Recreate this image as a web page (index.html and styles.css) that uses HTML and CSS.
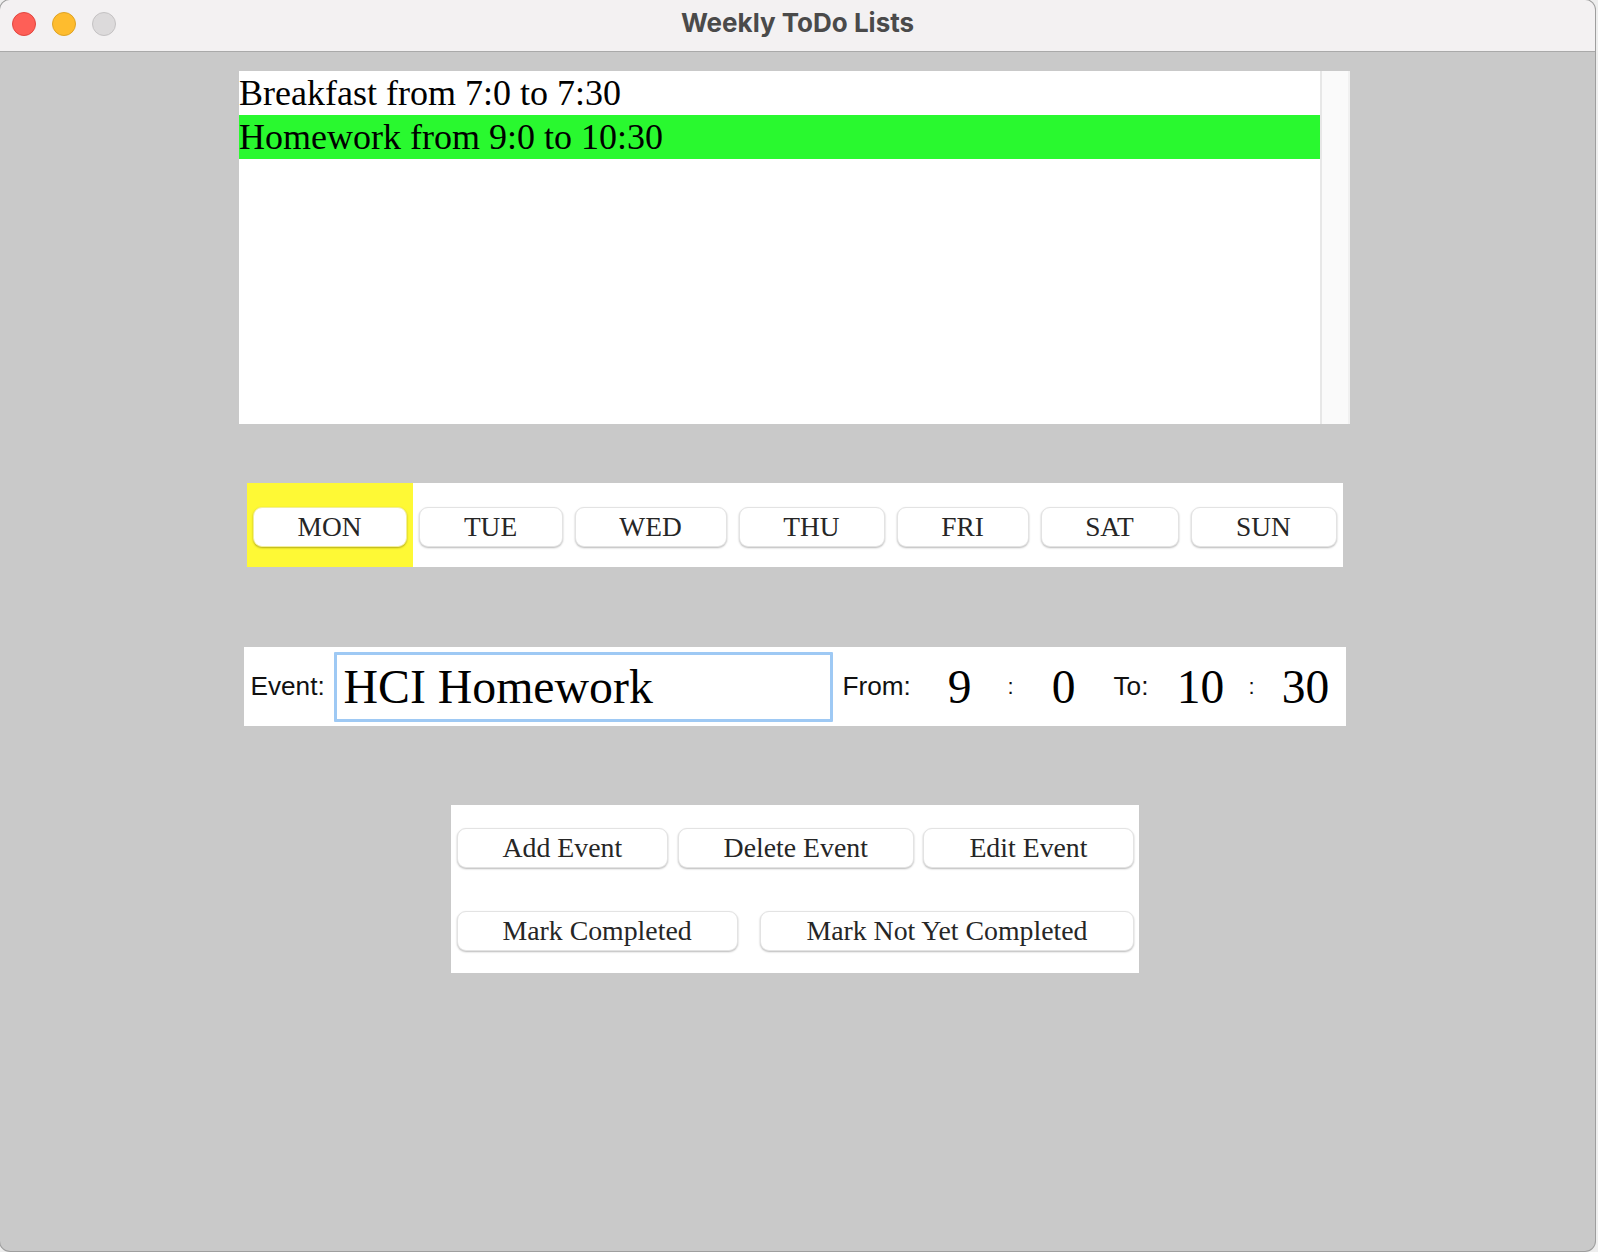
FILE: index.html
```html
<!DOCTYPE html>
<html lang="en">
<head>
<meta charset="utf-8">
<title>Weekly ToDo Lists</title>
<link rel="stylesheet" href="styles.css">
</head>
<body>
<div class="window">
  <header class="titlebar">
    <div class="lights">
      <span class="light red"></span>
      <span class="light yellow"></span>
      <span class="light gray"></span>
    </div>
    <div class="title">Weekly ToDo Lists</div>
    <div class="spacer"></div>
  </header>
  <main class="content">
    <section class="listbox">
      <ul class="items">
        <li class="item">Breakfast from 7:0 to 7:30</li>
        <li class="item done">Homework from 9:0 to 10:30</li>
      </ul>
      <div class="scrollbar"></div>
    </section>

    <nav class="days">
      <div class="day-cell active"><button class="btn day">MON</button></div>
      <div class="day-cell"><button class="btn day">TUE</button></div>
      <div class="day-cell"><button class="btn day">WED</button></div>
      <div class="day-cell"><button class="btn day">THU</button></div>
      <div class="day-cell"><button class="btn day">FRI</button></div>
      <div class="day-cell"><button class="btn day">SAT</button></div>
      <div class="day-cell"><button class="btn day">SUN</button></div>
    </nav>

    <section class="ev-row">
      <span class="lab lab-event">Event:</span>
      <input class="ev-input" type="text" value="HCI Homework">
      <span class="lab lab-from">From:</span>
      <span class="tnum t-h1">9</span>
      <span class="lab colon c1">:</span>
      <span class="tnum t-m1">0</span>
      <span class="lab lab-to">To:</span>
      <span class="tnum t-h2">10</span>
      <span class="lab colon c2">:</span>
      <span class="tnum t-m2">30</span>
    </section>

    <section class="actions">
      <div class="act-row">
        <button class="btn act">Add Event</button>
        <button class="btn act">Delete Event</button>
        <button class="btn act">Edit Event</button>
      </div>
      <div class="act-row">
        <button class="btn act">Mark Completed</button>
        <button class="btn act">Mark Not Yet Completed</button>
      </div>
    </section>
  </main>
</div>
</body>
</html>
```

FILE: styles.css
```css
html, body {
  margin: 0;
  padding: 0;
}
body {
  width: 1598px;
  height: 1252px;
  background: #eeeeee;
  overflow: hidden;
}
.window {
  width: 1595px;
  height: 1251px;
  background: #c9c9c9;
  border-radius: 10px;
  box-shadow: 0 0 0 1px #9e9e9e;
  overflow: hidden;
  display: flex;
  flex-direction: column;
}
.titlebar {
  height: 51px;
  flex: 0 0 51px;
  background: #f3f1f2;
  border-bottom: 1px solid #a9a9a9;
  display: grid;
  grid-template-columns: 1fr auto 1fr;
  align-items: center;
}
.lights {
  display: flex;
  gap: 16px;
  padding-left: 12px;
  align-self: start;
  margin-top: 12px;
}
.light {
  width: 22px;
  height: 22px;
  border-radius: 50%;
  border: 1px solid transparent;
}
.light.red { background: #fe5f57; border-color: #e1463f; }
.light.yellow { background: #febc2e; border-color: #dea325; }
.light.gray { background: #dcdadb; border-color: #c4c2c3; }
.title {
  font-family: Inter, "Liberation Sans", sans-serif;
  font-weight: 700;
  font-size: 26px;
  color: #4a4a4a;
  padding-bottom: 6px;
}

.content {
  display: flex;
  flex-direction: column;
  align-items: center;
  padding-top: 19px;
  padding-right: 6px;
}

/* list */
.listbox {
  width: 1111px;
  height: 353px;
  background: #ffffff;
  display: flex;
}
.items {
  list-style: none;
  margin: 0;
  padding: 0;
  flex: 1;
}
.item {
  height: 44px;
  line-height: 44px;
  font-family: "Liberation Serif", "Times New Roman", serif;
  font-size: 36px;
  color: #000;
  white-space: nowrap;
}
.item.done {
  background: #29f92f;
}
.scrollbar {
  width: 26px;
  background: #fafafa;
  border-left: 2px solid #e7e7e7;
  border-right: 2px solid #f1f1f1;
}

/* buttons */
.btn {
  height: 40px;
  padding: 0 45px;
  margin: 0;
  background: #ffffff;
  border: 1px solid #e3e3e3;
  border-radius: 9px;
  box-shadow: 0 1px 2px rgba(0, 0, 0, 0.28);
  font-family: "Liberation Serif", "Times New Roman", serif;
  font-size: 27.8px;
  color: #262626;
  white-space: nowrap;
  cursor: default;
}
.btn.day {
  width: 100%;
  padding: 0;
  text-align: center;
  font-size: 27.4px;
}

/* days */
.days {
  margin-top: 59px;
  width: 1096px;
  height: 84px;
  background: #ffffff;
  display: grid;
  grid-template-columns: 166px 156px 164px 158px 144px 150px 158px;
}
.day-cell {
  padding: 24px 6px 20px;
  box-sizing: border-box;
  height: 84px;
}
.day-cell.active {
  background: #fef935;
}
.day-cell.active .btn {
  box-shadow: 0 1px 2px rgba(120, 110, 0, 0.55);
  border-color: #f2ee9a;
}

/* event row */
.ev-row {
  margin-top: 80px;
  width: 1102px;
  height: 79px;
  box-sizing: border-box;
  padding-left: 7px;
  background: #ffffff;
  display: flex;
  align-items: center;
}
.lab {
  font-family: "Liberation Sans", Arial, sans-serif;
  font-size: 26.2px;
  color: #111;
  white-space: nowrap;
}
.lab-event { width: 74px; }
.ev-input {
  margin-left: 9px;
  width: 499px;
  height: 70px;
  box-sizing: border-box;
  border: 3px solid #9ec9f4;
  border-radius: 1px;
  padding: 0 6px 0 7px;
  outline: none;
  background: #fff;
  font-family: "Liberation Serif", "Times New Roman", serif;
  font-size: 47.8px;
  color: #000;
}
.lab-from { margin-left: 10px; width: 68px; }
.tnum {
  width: 60px;
  text-align: center;
  font-family: "Liberation Serif", "Times New Roman", serif;
  font-size: 47.5px;
  color: #000;
}
.colon { width: 20px; text-align: center; font-size: 22px; }
.t-h1 { margin-left: 19px; }
.c1 { margin-left: 11px; }
.t-m1 { margin-left: 13px; }
.lab-to { margin-left: 20px; width: 37px; }
.t-h2 { margin-left: 20px; }
.c2 { margin-left: 11px; }
.t-m2 { margin-left: 14px; }

/* actions */
.actions {
  margin-top: 79px;
  width: 688px;
  height: 168px;
  box-sizing: border-box;
  padding: 23px 5px 20px 6px;
  background: #ffffff;
  display: flex;
  flex-direction: column;
  gap: 43px;
}
.act-row {
  display: flex;
  justify-content: space-between;
}
```
